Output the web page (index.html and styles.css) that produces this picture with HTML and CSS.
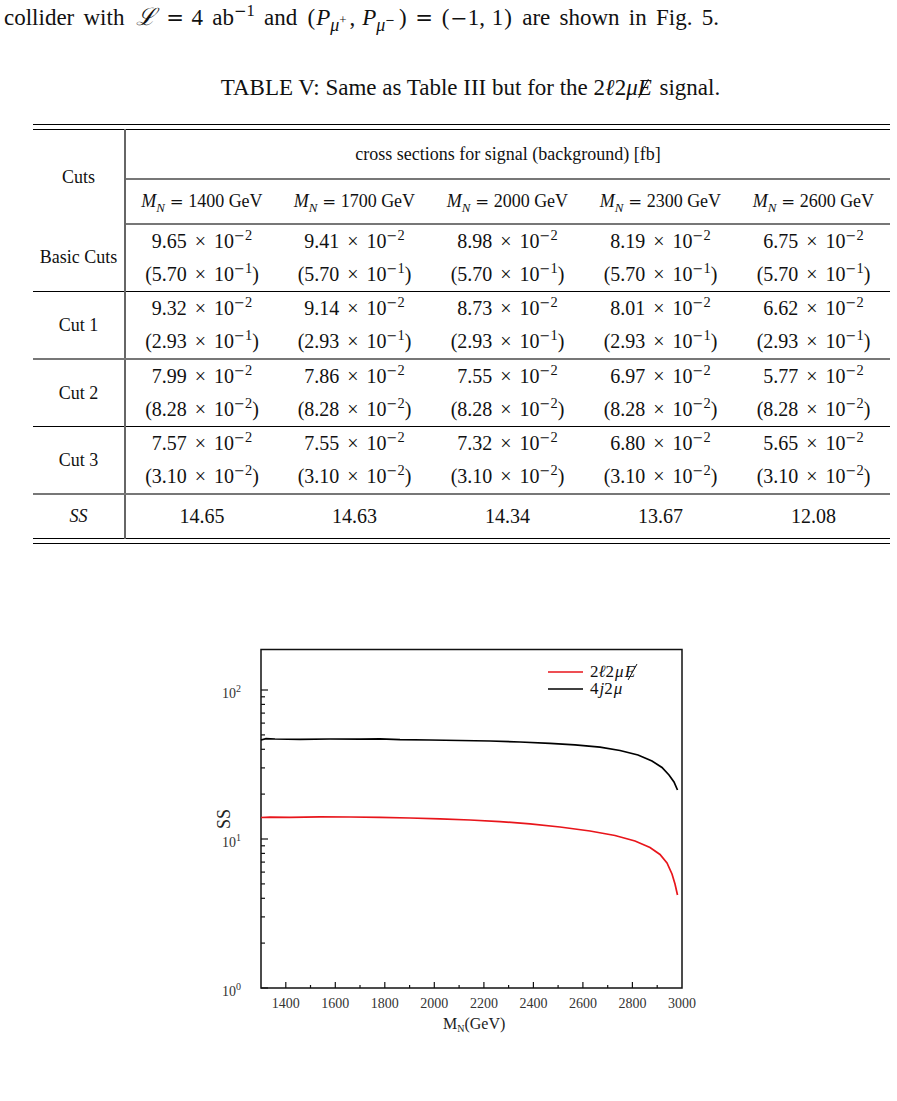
FILE: index.html
```html
<!DOCTYPE html>
<html lang="en">
<head>
    <meta charset="UTF-8">
    <meta name="viewport" content="width=device-width, initial-scale=1.0">
    <title>Table V and SS plot</title>
    <link rel="stylesheet" href="styles.css">
</head>
<body>

    <!-- Running text from the previous paragraph -->
    <p class="lead">collider with <i class="script">ℒ</i><span class="rel">=</span>4 ab<sup><span class="mn">−</span>1</sup> and <span class="paren">(</span><i>P</i><sub class="pm"><i>μ</i><sup>+</sup></sub>,<span class="thin"></span><i>P</i><sub class="pm"><i>μ</i><sup><span class="mn">−</span></sup></sub><span class="paren">)</span><span class="rel">=</span><span class="paren">(</span><span class="mn">−</span>1,<span class="thin"></span>1<span class="paren">)</span> are shown in Fig. 5.</p>

    <p class="caption">TABLE V: Same as Table III but for the <span class="math">2<i>ℓ</i>2<i>μ</i><i class="slashed">E</i></span> signal.</p>

    <!-- Table V -->
    <div class="table-wrap">
        <table class="cuts">
            <colgroup>
                <col class="col-label">
                <col><col><col><col><col>
            </colgroup>
            <tr class="head-top">
                <th rowspan="2" class="label">Cuts</th>
                <th colspan="5" class="span-head">cross sections for signal (background) [fb]</th>
            </tr>
            <tr class="head-mass">
                <th><i>M<sub>N</sub></i><span class="rel">=</span>1400 GeV</th>
                <th><i>M<sub>N</sub></i><span class="rel">=</span>1700 GeV</th>
                <th><i>M<sub>N</sub></i><span class="rel">=</span>2000 GeV</th>
                <th><i>M<sub>N</sub></i><span class="rel">=</span>2300 GeV</th>
                <th><i>M<sub>N</sub></i><span class="rel">=</span>2600 GeV</th>
            </tr>
            <tr class="row line-dark">
                <td class="label">Basic Cuts</td>
                <td><div>9.65<span class="op">×</span>10<sup><span class="mn">−</span>2</sup></div><div>(5.70<span class="op">×</span>10<sup><span class="mn">−</span>1</sup>)</div></td>
                <td><div>9.41<span class="op">×</span>10<sup><span class="mn">−</span>2</sup></div><div>(5.70<span class="op">×</span>10<sup><span class="mn">−</span>1</sup>)</div></td>
                <td><div>8.98<span class="op">×</span>10<sup><span class="mn">−</span>2</sup></div><div>(5.70<span class="op">×</span>10<sup><span class="mn">−</span>1</sup>)</div></td>
                <td><div>8.19<span class="op">×</span>10<sup><span class="mn">−</span>2</sup></div><div>(5.70<span class="op">×</span>10<sup><span class="mn">−</span>1</sup>)</div></td>
                <td><div>6.75<span class="op">×</span>10<sup><span class="mn">−</span>2</sup></div><div>(5.70<span class="op">×</span>10<sup><span class="mn">−</span>1</sup>)</div></td>
            </tr>
            <tr class="row line-grey">
                <td class="label">Cut 1</td>
                <td><div>9.32<span class="op">×</span>10<sup><span class="mn">−</span>2</sup></div><div>(2.93<span class="op">×</span>10<sup><span class="mn">−</span>1</sup>)</div></td>
                <td><div>9.14<span class="op">×</span>10<sup><span class="mn">−</span>2</sup></div><div>(2.93<span class="op">×</span>10<sup><span class="mn">−</span>1</sup>)</div></td>
                <td><div>8.73<span class="op">×</span>10<sup><span class="mn">−</span>2</sup></div><div>(2.93<span class="op">×</span>10<sup><span class="mn">−</span>1</sup>)</div></td>
                <td><div>8.01<span class="op">×</span>10<sup><span class="mn">−</span>2</sup></div><div>(2.93<span class="op">×</span>10<sup><span class="mn">−</span>1</sup>)</div></td>
                <td><div>6.62<span class="op">×</span>10<sup><span class="mn">−</span>2</sup></div><div>(2.93<span class="op">×</span>10<sup><span class="mn">−</span>1</sup>)</div></td>
            </tr>
            <tr class="row line-dark">
                <td class="label">Cut 2</td>
                <td><div>7.99<span class="op">×</span>10<sup><span class="mn">−</span>2</sup></div><div>(8.28<span class="op">×</span>10<sup><span class="mn">−</span>2</sup>)</div></td>
                <td><div>7.86<span class="op">×</span>10<sup><span class="mn">−</span>2</sup></div><div>(8.28<span class="op">×</span>10<sup><span class="mn">−</span>2</sup>)</div></td>
                <td><div>7.55<span class="op">×</span>10<sup><span class="mn">−</span>2</sup></div><div>(8.28<span class="op">×</span>10<sup><span class="mn">−</span>2</sup>)</div></td>
                <td><div>6.97<span class="op">×</span>10<sup><span class="mn">−</span>2</sup></div><div>(8.28<span class="op">×</span>10<sup><span class="mn">−</span>2</sup>)</div></td>
                <td><div>5.77<span class="op">×</span>10<sup><span class="mn">−</span>2</sup></div><div>(8.28<span class="op">×</span>10<sup><span class="mn">−</span>2</sup>)</div></td>
            </tr>
            <tr class="row line-grey">
                <td class="label">Cut 3</td>
                <td><div>7.57<span class="op">×</span>10<sup><span class="mn">−</span>2</sup></div><div>(3.10<span class="op">×</span>10<sup><span class="mn">−</span>2</sup>)</div></td>
                <td><div>7.55<span class="op">×</span>10<sup><span class="mn">−</span>2</sup></div><div>(3.10<span class="op">×</span>10<sup><span class="mn">−</span>2</sup>)</div></td>
                <td><div>7.32<span class="op">×</span>10<sup><span class="mn">−</span>2</sup></div><div>(3.10<span class="op">×</span>10<sup><span class="mn">−</span>2</sup>)</div></td>
                <td><div>6.80<span class="op">×</span>10<sup><span class="mn">−</span>2</sup></div><div>(3.10<span class="op">×</span>10<sup><span class="mn">−</span>2</sup>)</div></td>
                <td><div>5.65<span class="op">×</span>10<sup><span class="mn">−</span>2</sup></div><div>(3.10<span class="op">×</span>10<sup><span class="mn">−</span>2</sup>)</div></td>
            </tr>
            <tr class="ss-row">
                <td class="label"><i>SS</i></td>
                <td>14.65</td>
                <td>14.63</td>
                <td>14.34</td>
                <td>13.67</td>
                <td>12.08</td>
            </tr>
        </table>
    </div>

    <!-- Fig. 5: SS against M_N -->
    <div class="figure">
        <svg width="520" height="420" viewBox="190 630 520 420">
            <!-- frame -->
            <rect x="261" y="650.5" width="421" height="338.5" fill="none" stroke="#111" stroke-width="1.5"/>

            <!-- y ticks (log scale) -->
            <g stroke="#111" stroke-width="1.2">
                <line x1="261" y1="989" x2="268" y2="989"/>
                <line x1="261" y1="840" x2="268" y2="840"/>
                <line x1="261" y1="691" x2="268" y2="691"/>
                <line x1="261" y1="944.1" x2="265" y2="944.1"/>
                <line x1="261" y1="917.9" x2="265" y2="917.9"/>
                <line x1="261" y1="899.3" x2="265" y2="899.3"/>
                <line x1="261" y1="884.9" x2="265" y2="884.9"/>
                <line x1="261" y1="873.1" x2="265" y2="873.1"/>
                <line x1="261" y1="863.1" x2="265" y2="863.1"/>
                <line x1="261" y1="854.4" x2="265" y2="854.4"/>
                <line x1="261" y1="846.8" x2="265" y2="846.8"/>
                <line x1="261" y1="795.1" x2="265" y2="795.1"/>
                <line x1="261" y1="768.9" x2="265" y2="768.9"/>
                <line x1="261" y1="750.3" x2="265" y2="750.3"/>
                <line x1="261" y1="735.9" x2="265" y2="735.9"/>
                <line x1="261" y1="724.1" x2="265" y2="724.1"/>
                <line x1="261" y1="714.1" x2="265" y2="714.1"/>
                <line x1="261" y1="705.4" x2="265" y2="705.4"/>
                <line x1="261" y1="697.8" x2="265" y2="697.8"/>
            </g>

            <!-- x ticks -->
            <g stroke="#111" stroke-width="1.2">
                <line x1="285.8" y1="989" x2="285.8" y2="983"/>
                <line x1="335.3" y1="989" x2="335.3" y2="983"/>
                <line x1="384.8" y1="989" x2="384.8" y2="983"/>
                <line x1="434.3" y1="989" x2="434.3" y2="983"/>
                <line x1="483.9" y1="989" x2="483.9" y2="983"/>
                <line x1="533.4" y1="989" x2="533.4" y2="983"/>
                <line x1="582.9" y1="989" x2="582.9" y2="983"/>
                <line x1="632.4" y1="989" x2="632.4" y2="983"/>
                <line x1="310.5" y1="989" x2="310.5" y2="986"/>
                <line x1="360" y1="989" x2="360" y2="986"/>
                <line x1="409.6" y1="989" x2="409.6" y2="986"/>
                <line x1="459.1" y1="989" x2="459.1" y2="986"/>
                <line x1="508.6" y1="989" x2="508.6" y2="986"/>
                <line x1="558.1" y1="989" x2="558.1" y2="986"/>
                <line x1="607.7" y1="989" x2="607.7" y2="986"/>
                <line x1="657.2" y1="989" x2="657.2" y2="986"/>
            </g>

            <!-- tick labels -->
            <g class="tick-label" text-anchor="middle">
                <text x="285.8" y="1009">1400</text>
                <text x="335.3" y="1009">1600</text>
                <text x="384.8" y="1009">1800</text>
                <text x="434.3" y="1009">2000</text>
                <text x="483.9" y="1009">2200</text>
                <text x="533.4" y="1009">2400</text>
                <text x="582.9" y="1009">2600</text>
                <text x="632.4" y="1009">2800</text>
                <text x="681.9" y="1009">3000</text>
            </g>
            <g class="tick-label">
                <text x="222" y="997">10<tspan class="exp" dy="-6">0</tspan></text>
                <text x="222" y="848">10<tspan class="exp" dy="-6">1</tspan></text>
                <text x="222" y="699">10<tspan class="exp" dy="-6">2</tspan></text>
            </g>

            <!-- axis titles -->
            <text class="axis-title" x="443" y="1030">M<tspan class="idx" dy="3">N</tspan><tspan dy="-3">(GeV)</tspan></text>
            <text class="axis-title ss" x="0" y="0" transform="translate(230 820) rotate(-90)" text-anchor="middle">SS</text>

            <!-- curves -->
            <polyline class="curve" stroke="#000" points="261,741 266,739.6 275,740 300,740.3 330,740 360,740.2 380,739.8 400,740.6 430,741 460,741.5 490,742 520,743 550,744.3 575,745.8 600,748.2 620,751.5 638,756 652,762 662,768.5 669,776 674,783 677.5,791"/>
            <polyline class="curve" stroke="#e8151b" points="261,818.5 270,818.2 290,818.4 320,817.8 350,818 380,818.3 410,819 440,819.8 470,821 500,822.6 530,824.8 560,828 590,832 615,836.5 635,842 650,848.5 660,855.5 667,864 672,875 675,885 677.5,896"/>

            <!-- legend -->
            <line x1="548" y1="673" x2="583" y2="673" stroke="#e8151b" stroke-width="1.4"/>
            <line x1="548" y1="690" x2="583" y2="690" stroke="#000" stroke-width="1.4"/>
            <text class="legend" x="590" y="678">2<tspan font-style="italic">ℓ</tspan>2<tspan font-style="italic" dx="1">μ</tspan><tspan font-style="italic" dx="1">E</tspan></text>
            <line x1="628" y1="681" x2="637" y2="665" stroke="#111" stroke-width="1"/>
            <text class="legend" x="590" y="695">4<tspan font-style="italic" dx="1">j</tspan>2<tspan font-style="italic" dx="1">μ</tspan></text>
        </svg>
    </div>

</body>
</html>
```

FILE: styles.css
```css
body {
    margin: 0;
    font-family: "Liberation Serif", "Times New Roman", serif;
    color: #111;
    background: #fff;
}

sup, sub {
    line-height: 0;
    font-size: 72%;
}

/* math pieces: wider relation, operator and minus glyphs */
.rel {
    font-family: "DejaVu Sans", sans-serif;
    font-size: 0.92em;
    margin: 0 0.36em;
}

.op {
    margin: 0 0.4em;
}

.mn {
    font-family: "DejaVu Sans", sans-serif;
    font-size: 0.9em;
}

.thin {
    display: inline-block;
    width: 0.3em;
}

.paren {
    margin: 0 1px;
}

/* Running text (justified in the source, so wider word gaps) */
.lead {
    margin: 0;
    padding: 3px 0 0 4px;
    font-size: 23px;
    line-height: 28px;
    word-spacing: 3.5px;
}

.script {
    font-family: "DejaVu Serif", serif;
    font-size: 24px;
    margin: 0 3px 0 2px;
}

.pm {
    font-size: 78%;
    margin-right: 3px;
}

/* Caption */
.caption {
    margin: 42px 0 0 44px;
    text-align: center;
    font-size: 23px;
    line-height: 28px;
}

.slashed {
    position: relative;
    padding-right: 2px;
}

.slashed::after {
    content: "";
    position: absolute;
    left: 5px;
    top: 3px;
    width: 1.3px;
    height: 21px;
    background: #111;
    transform: rotate(28deg);
}

/* Table */
.table-wrap {
    margin: 22px 0 0 33px;
    width: 857px;
    border-top: 1.5px solid #000;
    border-bottom: 1.5px solid #000;
    padding: 4px 0;
}

.cuts {
    width: 857px;
    table-layout: fixed;
    border-collapse: collapse;
    border-top: 1.5px solid #000;
    border-bottom: 1px solid #000;
    font-size: 19px;
}

.col-label {
    width: 92px;
}

.cuts th,
.cuts td {
    padding: 0;
    text-align: center;
    font-weight: normal;
    white-space: nowrap;
}

.cuts .label {
    font-size: 18px;
    border-right: 2px solid #666;
}

.head-top th {
    height: 48px;
}

.span-head {
    font-size: 18px;
    border-bottom: 2px solid #777;
}

.head-mass th {
    height: 43px;
    font-size: 18px;
    border-bottom: 2px solid #777;
}

.head-mass .rel {
    margin: 0 0.28em;
}

.row td {
    font-size: 20px;
}

.row td div {
    line-height: 33px;
}

.line-dark td {
    border-bottom: 1px solid #000;
}

.line-grey td {
    border-bottom: 2px solid #777;
}

.ss-row td {
    height: 43px;
    font-size: 20px;
}

/* Figure */
.figure {
    margin: 85px 0 0 190px;
}

.figure svg {
    display: block;
}

.tick-label {
    font-family: "Liberation Serif", serif;
    font-size: 14px;
    fill: #333;
}

.exp {
    font-size: 10px;
}

.axis-title {
    font-family: "Liberation Serif", serif;
    font-size: 16px;
    fill: #222;
}

.ss {
    font-size: 18px;
}

.idx {
    font-size: 10px;
}

.curve {
    fill: none;
    stroke-width: 1.7;
}

.legend {
    font-family: "Liberation Serif", serif;
    font-size: 17px;
    fill: #111;
}
```
